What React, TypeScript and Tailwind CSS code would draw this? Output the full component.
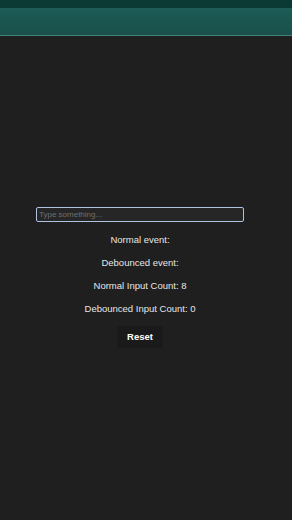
import { useState } from "react";

export default function App() {
  const [value, setValue] = useState("");
  const [normal, setNormal] = useState("");
  const [normalCount, setNormalCount] = useState(8);
  const [debouncedCount, setDebouncedCount] = useState(0);

  return (
    <div
      className="min-h-[520px] w-full bg-[#1f1f1f] flex flex-col"
      style={{ fontFamily: '"Liberation Sans", Arial, sans-serif' }}
    >
      {/* top app bar */}
      <div className="h-[8px] bg-[#0b3a34]" />
      <div className="h-[28px] bg-gradient-to-b from-[#1d5c56] to-[#1a4f4a] border-b border-[#3f8078]" />

      <div className="flex flex-col items-center pt-[171px] pr-[12px]">
        <input
          value={value}
          onChange={(e) => {
            setValue(e.target.value);
            setNormal(e.target.value);
            setNormalCount((c) => c + 1);
          }}
          placeholder="Type something..."
          className="w-[208px] h-[15px] px-[2px] text-[8px] text-[#d0d0d0] placeholder:text-[#6f6f6f] bg-[#262626] border border-[#aec3e2] rounded-[2px] outline-none"
        />

        <div className="flex flex-col items-center gap-[9px] mt-[11px] text-[9.5px] leading-[14px] text-[#e6e6e6]">
          <p>Normal event: {normal}</p>
          <p>Debounced event:</p>
          <p>Normal Input Count: {normalCount}</p>
          <p>Debounced Input Count: {debouncedCount}</p>
        </div>

        <button
          onClick={() => {
            setValue("");
            setNormal("");
            setNormalCount(0);
            setDebouncedCount(0);
          }}
          className="mt-[10px] w-[46px] h-[22px] bg-[#1a1a1a] rounded-[3px] text-[9.5px] font-bold text-white"
        >
          Reset
        </button>
      </div>
    </div>
  );
}
